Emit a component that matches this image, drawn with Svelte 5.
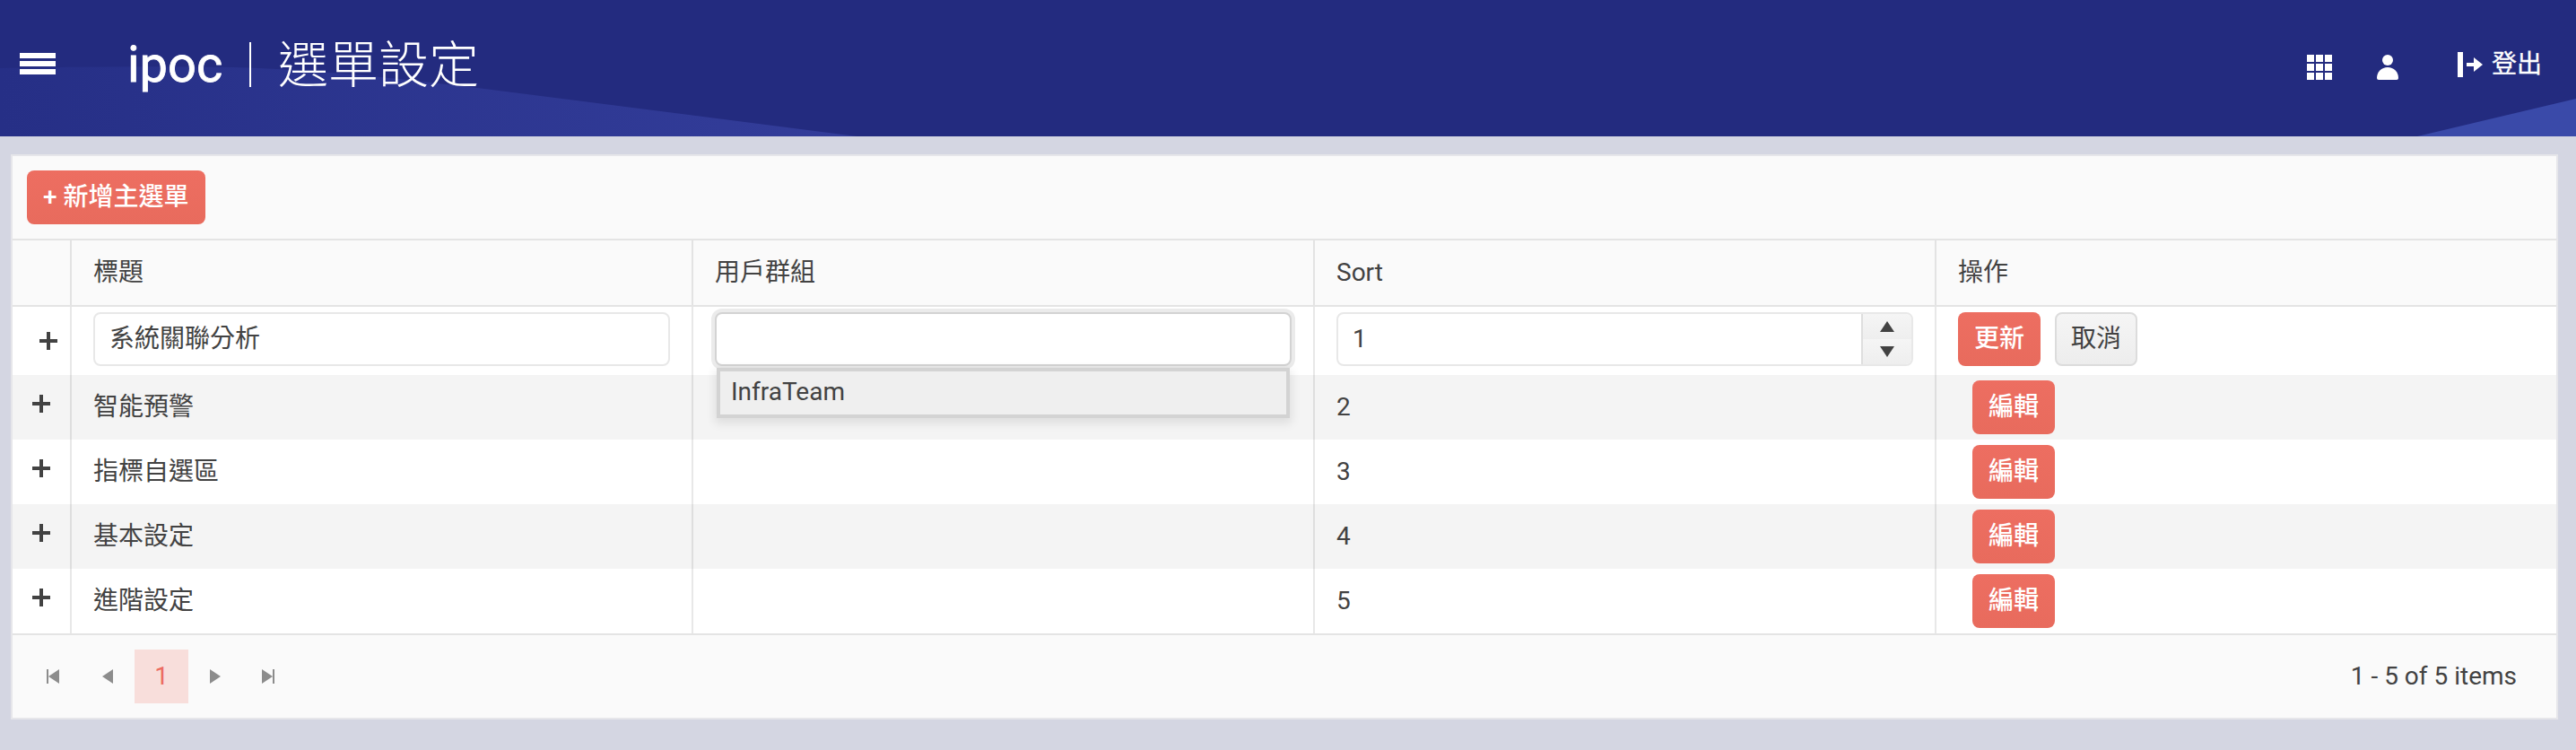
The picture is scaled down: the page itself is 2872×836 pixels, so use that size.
<script>
  const rows = [
    { title: '智能預警', sort: 2 },
    { title: '指標自選區', sort: 3 },
    { title: '基本設定', sort: 4 },
    { title: '進階設定', sort: 5 }
  ];
</script>

<div class="page">
  <header>
    <svg class="backdrop" viewBox="0 0 2872 152" preserveAspectRatio="none" aria-hidden="true">
      <defs>
        <linearGradient id="wave" gradientUnits="userSpaceOnUse" x1="0" y1="0" x2="950" y2="0">
          <stop offset="0" stop-color="#262f86" />
          <stop offset="1" stop-color="#333d9a" />
        </linearGradient>
      </defs>
      <path d="M0 76Q150 73 260 75C360 78 430 86 540 99L955 152H0Z" fill="url(#wave)" />
      <path d="M2695 152L2872 110V152Z" fill="#3a4aa9" />
    </svg>
    <button class="menu" aria-label="menu"><i></i><i></i><i></i></button>
    <span class="brand">ipoc</span>
    <span class="rule"></span>
    <h1>選單設定</h1>
    <nav>
      <svg width="28" height="28" viewBox="0 0 28 28" fill="#fff">
        <path d="M0 0h8v8H0zM10 0h8v8h-8zM20 0h8v8h-8zM0 10h8v8H0zM10 10h8v8h-8zM20 10h8v8h-8zM0 20h8v8H0zM10 20h8v8h-8zM20 20h8v8h-8z" />
      </svg>
      <svg class="user" width="24" height="28" viewBox="0 0 24 28" fill="#fff">
        <circle cx="12" cy="6" r="6" />
        <path d="M0 26C0 19 5 14 12 14s12 5 12 12q0 2-2 2H2q-2 0-2-2z" />
      </svg>
      <span class="logout">
        <svg width="28" height="28" viewBox="0 0 28 28" fill="#fff">
          <path d="M0 0h6v28H0zM10 12h8V6l10 8-10 8v-6h-8z" />
        </svg>
        <span>登出</span>
      </span>
    </nav>
  </header>

  <main>
    <div class="toolbar"><button class="btn primary">+ 新增主選單</button></div>

    <div class="row head">
      <div></div>
      <div>標題</div>
      <div>用戶群組</div>
      <div>Sort</div>
      <div>操作</div>
    </div>

    <div class="row edit">
      <div class="toggle"><i class="plus"></i></div>
      <div><span class="field">系統關聯分析</span></div>
      <div>
        <div class="select">
          <span class="field focus"></span>
          <div class="popup">InfraTeam</div>
        </div>
      </div>
      <div>
        <span class="field numeric">
          <span>1</span>
          <span class="spin">
            <i><svg width="16" height="16" viewBox="0 0 16 16"><path d="M0 14L8 2l8 12z" /></svg></i>
            <i><svg width="16" height="16" viewBox="0 0 16 16"><path d="M0 2h16L8 14z" /></svg></i>
          </span>
        </span>
      </div>
      <div class="actions">
        <button class="btn primary">更新</button>
        <button class="btn">取消</button>
      </div>
    </div>

    {#each rows as row, i}
      <div class="row data" class:alt={i % 2 === 0}>
        <div class="toggle"><i class="plus"></i></div>
        <div>{row.title}</div>
        <div></div>
        <div>{row.sort}</div>
        <div class="single"><button class="btn primary">編輯</button></div>
      </div>
    {/each}

    <footer>
      <div class="pages">
        <span class="edge"><svg width="14" height="16" viewBox="0 0 14 16"><path d="M0 0h2v16H0zM14 0v16L2 8z" /></svg></span>
        <span><svg width="12" height="16" viewBox="0 0 12 16"><path d="M12 0v16L0 8z" /></svg></span>
        <span class="current">1</span>
        <span><svg width="12" height="16" viewBox="0 0 12 16"><path d="M0 0v16l12-8z" /></svg></span>
        <span class="edge"><svg width="14" height="16" viewBox="0 0 14 16"><path d="M12 0h2v16h-2zM0 0v16l12-8z" /></svg></span>
      </div>
      <div class="info">1 - 5 of 5 items</div>
    </footer>
  </main>
</div>

<style>
  :global(body) {
    margin: 0;
    background: #d4d6e2;
  }
  .page {
    height: 836px;
    box-sizing: border-box;
    background: #d4d6e2;
    font: 28px/40px Roboto, 'Noto Sans CJK TC', sans-serif;
    color: #424242;
    overflow: hidden;
  }
  .page :global(*) {
    box-sizing: border-box;
  }
  svg {
    display: block;
    flex: none;
  }
  header {
    position: relative;
    display: flex;
    align-items: center;
    height: 152px;
    padding: 0 38px 0 22px;
    background: #232b7f;
    color: #fff;
  }
  .backdrop {
    position: absolute;
    inset: 0;
    width: 100%;
    height: 100%;
  }
  header > :not(.backdrop) {
    position: relative;
  }
  .menu {
    display: flex;
    flex-direction: column;
    gap: 3px;
    width: 40px;
    margin: -10px 80px 0 0;
    padding: 0;
    border: 0;
    background: none;
  }
  .menu i {
    height: 6px;
    background: #fff;
  }
  .brand {
    width: 106px;
    margin-top: -8px;
    font-size: 56px;
    line-height: 80px;
    font-weight: 400;
    -webkit-text-stroke: 0.8px #fff;
  }
  .rule {
    width: 2px;
    height: 50px;
    margin: -8px 30px 0 30px;
    background: #fff;
  }
  h1 {
    margin: -6px 0 0;
    font-size: 56px;
    line-height: 80px;
    font-weight: 300;
  }
  nav {
    display: flex;
    align-items: center;
    margin-left: auto;
    margin-top: -2px;
  }
  .user {
    margin: 0 66px 0 50px;
  }
  .logout {
    display: flex;
    align-items: center;
    gap: 10px;
    margin-top: -6px;
    -webkit-text-stroke: 0.3px #fff;
  }
  main {
    width: 2840px;
    height: 630px;
    margin: 20px 0 0 12px;
    border: 2px solid #e6e6ea;
    background: #fff;
  }
  .toolbar {
    height: 94px;
    padding: 16px;
    border-bottom: 2px solid #e4e4e4;
    background: #fafafa;
  }
  .btn {
    display: inline-block;
    height: 60px;
    padding: 8px 16px;
    border: 2px solid #dcdcdc;
    border-radius: 8px;
    background: linear-gradient(#f5f5f5, #ededed);
    color: #424242;
    font: inherit;
  }
  .primary {
    border-color: transparent;
    background: linear-gradient(#ed6e61, #e86b5d) border-box;
    color: #fff;
    font-weight: 500;
  }
  .row {
    display: grid;
    grid-template-columns: 64px repeat(4, 693px);
    height: 72px;
  }
  .row > div {
    padding: 16px 24px;
    border-left: 2px solid rgba(0, 0, 0, 0.09);
  }
  .row > div:first-child {
    border-left: 0;
  }
  .head {
    height: 74px;
    border-bottom: 2px solid #e4e4e4;
    background: #fafafa;
  }
  .edit {
    height: 76px;
  }
  .edit > div {
    padding: 6px 24px;
  }
  .alt {
    background: #f4f4f4;
  }
  .row > .single {
    padding: 6px 40px;
  }
  .actions {
    display: flex;
    gap: 16px;
  }
  .row > .toggle {
    padding: 22px 0 0 22px;
  }
  .edit > .toggle {
    padding: 28px 0 0 30px;
  }
  .plus {
    display: block;
    width: 20px;
    height: 20px;
    background:
      linear-gradient(#424242, #424242) center / 20px 4px no-repeat,
      linear-gradient(#424242, #424242) center / 4px 20px no-repeat;
  }
  .field {
    display: block;
    height: 60px;
    padding: 8px 16px;
    border: 2px solid #e8e8e8;
    border-radius: 8px;
    background: #fff;
  }
  .focus {
    border-color: #d3d3d3;
    box-shadow: 0 0 0 4px #ebebeb;
  }
  .select {
    position: relative;
  }
  .popup {
    position: absolute;
    z-index: 2;
    top: 62px;
    left: 2px;
    right: 2px;
    height: 56px;
    padding: 5px 12px;
    line-height: 36px;
    border: 4px solid #d3d3d3;
    background: #efefef;
    box-shadow: 0 4px 10px 2px rgba(0, 0, 0, 0.09);
  }
  .numeric {
    display: flex;
    justify-content: space-between;
    padding: 0 0 0 16px;
    line-height: 56px;
    overflow: hidden;
  }
  .spin {
    width: 56px;
    border-left: 2px solid #dedede;
  }
  .spin i {
    display: flex;
    align-items: center;
    justify-content: center;
    height: 28px;
    background: linear-gradient(#f5f5f5, #eeeeee);
    fill: #424242;
  }
  footer {
    display: flex;
    justify-content: space-between;
    align-items: center;
    height: 94px;
    padding: 0 44px 0 16px;
    border-top: 2px solid #e4e4e4;
    background: #fafafa;
  }
  .pages {
    display: flex;
  }
  .pages span {
    display: flex;
    align-items: center;
    justify-content: center;
    width: 60px;
    height: 60px;
    fill: #8c8c8c;
  }
  .pages .edge {
    padding-right: 2px;
  }
  .pages .current {
    background: #f8dedb;
    color: #ec6b5f;
  }
</style>
